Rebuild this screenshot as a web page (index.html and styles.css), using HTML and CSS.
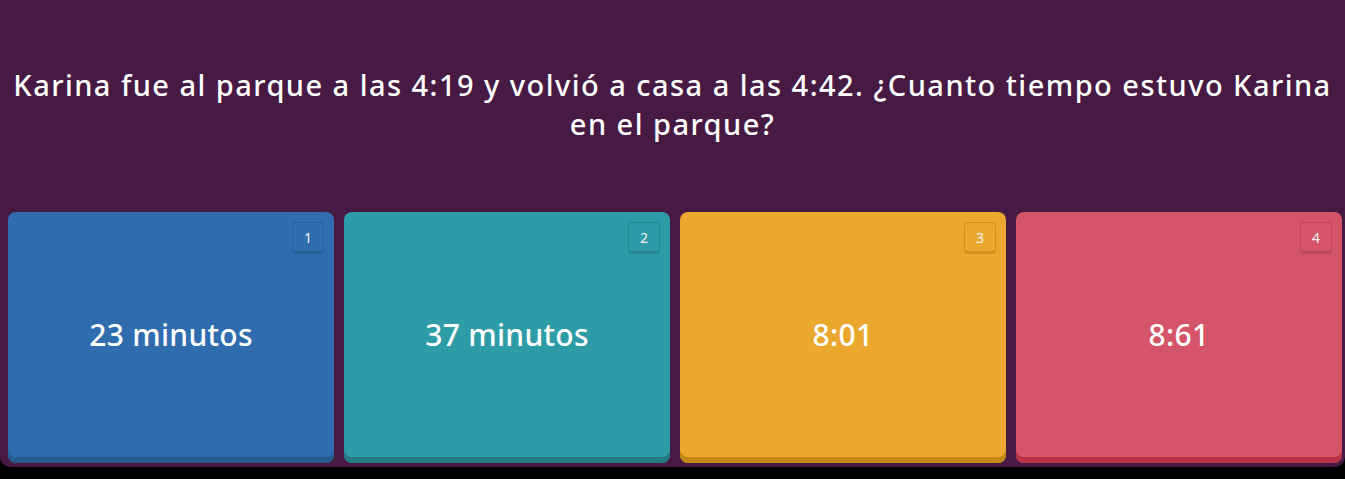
FILE: index.html
```html
<!DOCTYPE html>
<html lang="es">
<head>
<meta charset="utf-8">
<title>Quiz</title>
<link rel="stylesheet" href="styles.css">
</head>
<body>
<div class="panel">
  <div class="question">
    <p class="question-text">Karina fue al parque a las 4:19 y volvió a casa a las 4:42. ¿Cuanto tiempo estuvo Karina en el parque?</p>
  </div>
  <div class="options">
    <div class="option blue"><span class="key">1</span><span class="label">23 minutos</span></div>
    <div class="option teal"><span class="key">2</span><span class="label">37 minutos</span></div>
    <div class="option yellow"><span class="key">3</span><span class="label">8:01</span></div>
    <div class="option red"><span class="key">4</span><span class="label">8:61</span></div>
  </div>
</div>
</body>
</html>
```
FILE: styles.css
```css
html, body {
  margin: 0;
  padding: 0;
  background: #000;
}
body {
  width: 1345px;
  height: 479px;
  overflow: hidden;
  font-family: "Noto Sans", "Open Sans", sans-serif;
  color: #fff;
}
.panel {
  height: 467px;
  background: #461a43;
  border-radius: 0 0 10px 10px;
  box-sizing: border-box;
  padding: 0 3px 0 8px;
  display: flex;
  flex-direction: column;
}
.question {
  height: 212px;
  display: flex;
  align-items: center;
  justify-content: center;
  padding: 0 0 4px;
  box-sizing: border-box;
  margin-left: -8px;
  margin-right: -3px;
}
.question-text {
  margin: 0;
  max-width: 1330px;
  text-align: center;
  font-size: 29px;
  font-weight: 500;
  line-height: 39px;
  letter-spacing: 1.46px;
}
.options {
  display: grid;
  grid-template-columns: repeat(4, 326px);
  column-gap: 10px;
  height: 251px;
}
.option {
  position: relative;
  border-radius: 8px;
  display: flex;
  align-items: center;
  justify-content: center;
  padding-bottom: 6px;
  box-sizing: border-box;
}
.label {
  font-size: 30px;
  font-weight: 500;
  letter-spacing: 0.3px;
}
.key {
  position: absolute;
  top: 10px;
  right: 10px;
  width: 32px;
  height: 32px;
  box-sizing: border-box;
  border-radius: 4px;
  border: 1px solid rgba(0, 0, 0, 0.12);
  border-bottom-width: 3px;
  font-size: 14px;
  display: flex;
  align-items: center;
  justify-content: center;
  color: #f4f0f4;
}
.blue { background: #2f6dae; box-shadow: inset 0 -6px 0 #275a8e; }
.teal { background: #2d9ca6; box-shadow: inset 0 -6px 0 #247a80; }
.yellow { background: #eba82e; box-shadow: inset 0 -6px 0 #c28714; }
.red { background: #d45469; box-shadow: inset 0 -6px 0 #bb3148; }
.blue .key { border-color: #285f98; }
.teal .key { border-color: #26868e; }
.yellow .key { border-color: #d0921c; }
.red .key { border-color: #bc475a; }
```
